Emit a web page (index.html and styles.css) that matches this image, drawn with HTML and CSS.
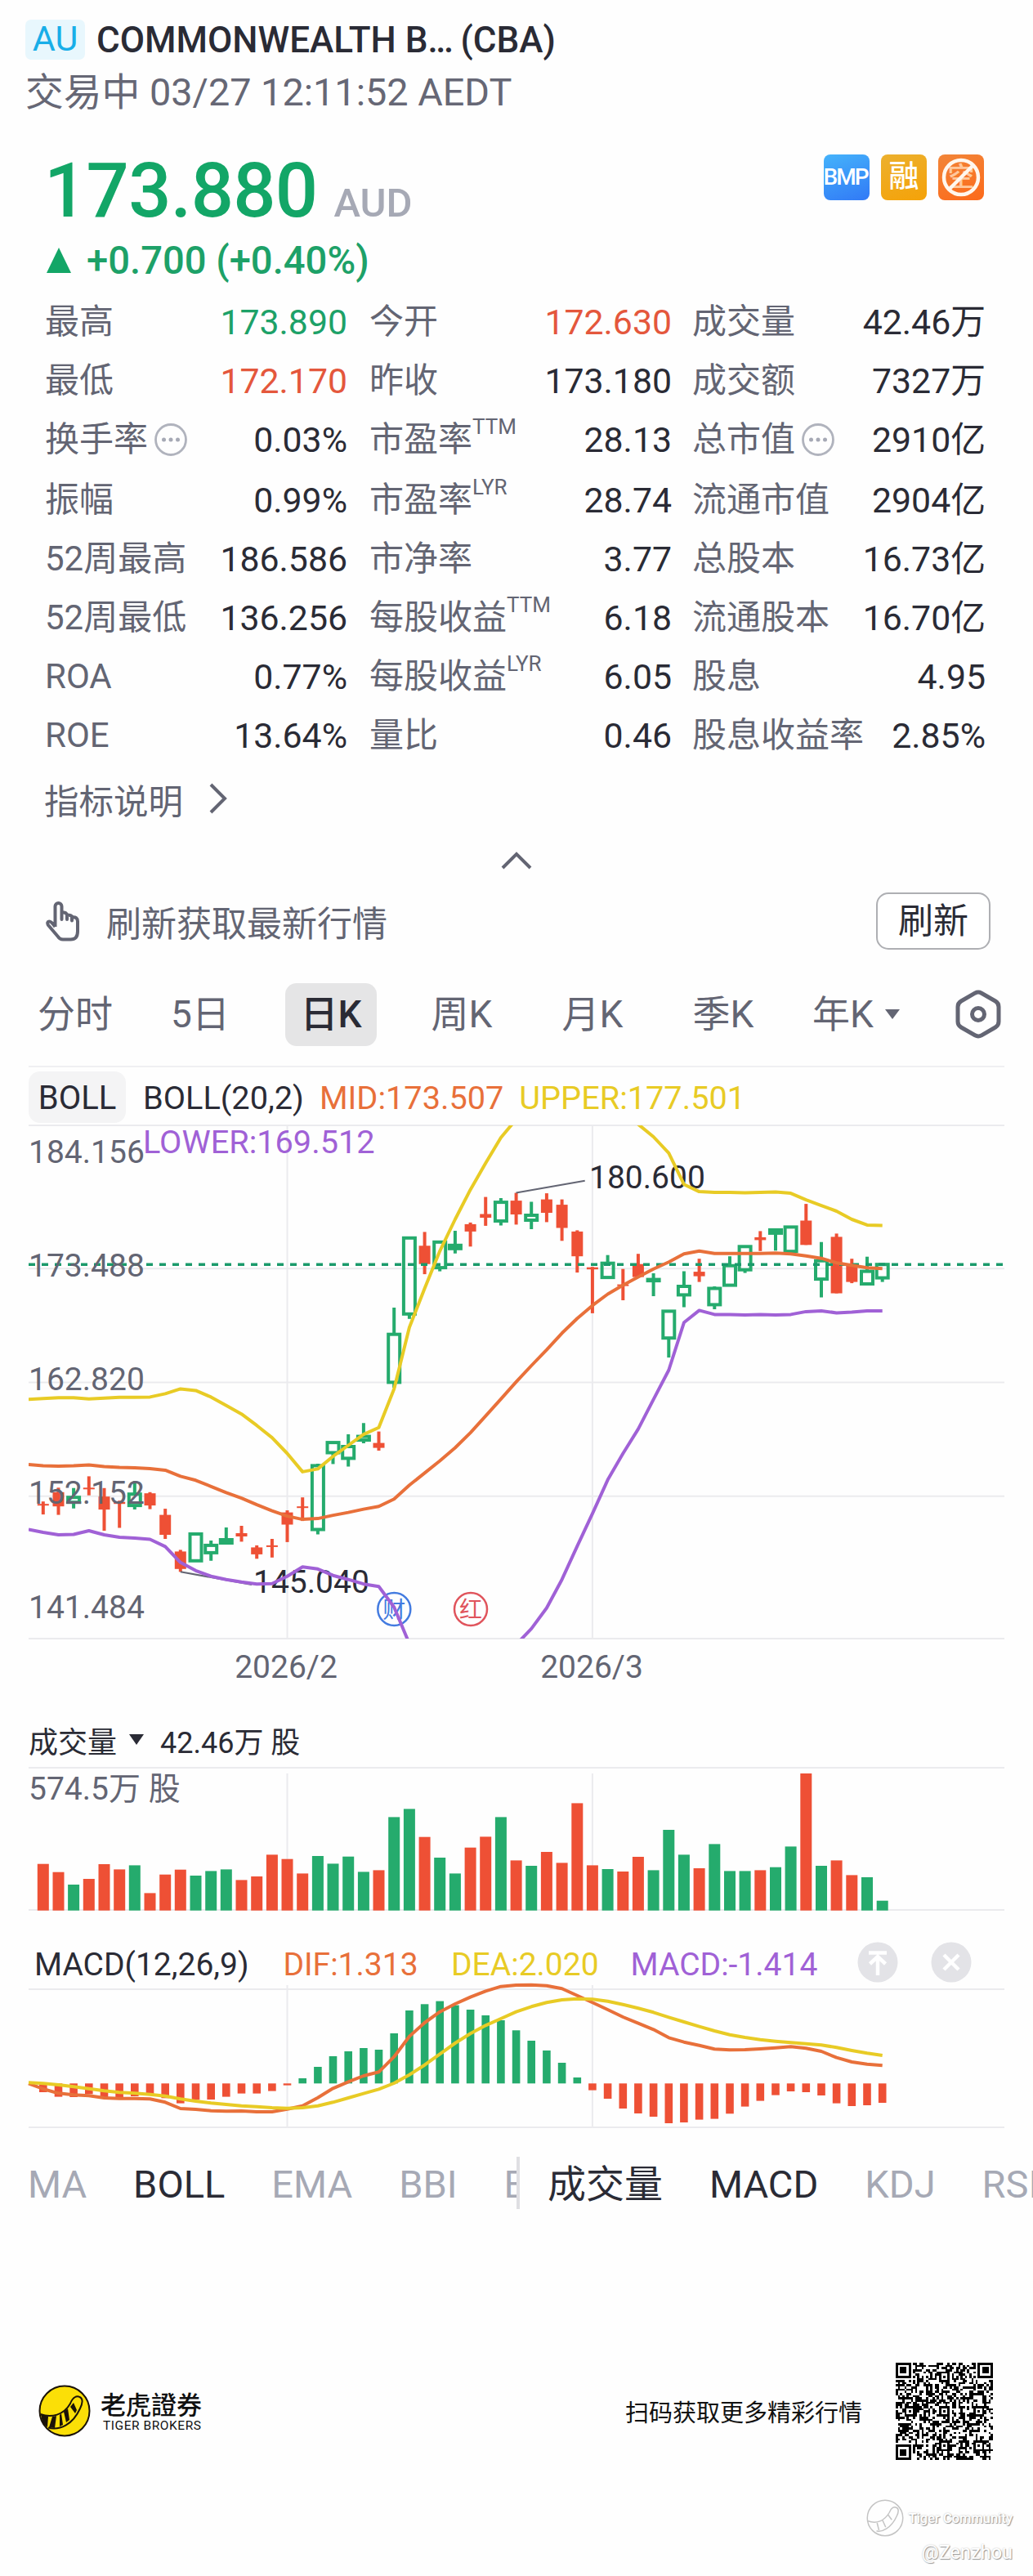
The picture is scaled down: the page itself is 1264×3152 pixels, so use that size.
FILE: index.html
```html
<!DOCTYPE html>
<html lang="zh-CN">
<head>
    <meta charset="UTF-8">
    <meta name="viewport" content="width=device-width, initial-scale=1.0">
    <title>COMMONWEALTH BANK (CBA)</title>
    <link rel="stylesheet" href="styles.css">
</head>
<body>
    <header class="header">
        <div class="header-title">
            <span class="market-tag">AU</span>
            <h1 class="stock-name">COMMONWEALTH B<span class="dots">...</span> (CBA)</h1>
        </div>
        <div class="header-time">交易中 03/27 12:11:52 AEDT</div>
    </header>

    <section class="quote">
        <div class="quote-main">
            <div class="price-row"><span class="price">173.880</span><span class="currency">AUD</span></div>
            <div class="change-row"><span class="arrow-up"></span>+0.700 (+0.40%)</div>
        </div>
        <div class="badges">
            <span class="badge badge-bmp">BMP</span>
            <span class="badge badge-margin">融</span>
            <span class="badge badge-short">空
                <svg class="badge-ban" viewBox="0 0 56 56"><circle cx="28" cy="28" r="21"/><path d="M43 13L13 43"/></svg>
            </span>
        </div>
    </section>

    <section class="stats">
        <div class="stats-col">
            <div class="stat"><span class="label">最高</span><span class="value up">173.890</span></div>
            <div class="stat"><span class="label">最低</span><span class="value down">172.170</span></div>
            <div class="stat tall"><span class="label">换手率<svg class="info" viewBox="0 0 40 40"><circle class="ring" cx="20" cy="20" r="18.5"/><circle cx="11.500" cy="20" r="2.500"/><circle cx="20" cy="20" r="2.500"/><circle cx="28.500" cy="20" r="2.500"/></svg></span><span class="value">0.03%</span></div>
            <div class="stat"><span class="label">振幅</span><span class="value">0.99%</span></div>
            <div class="stat"><span class="label">52周最高</span><span class="value">186.586</span></div>
            <div class="stat"><span class="label">52周最低</span><span class="value">136.256</span></div>
            <div class="stat"><span class="label">ROA</span><span class="value">0.77%</span></div>
            <div class="stat"><span class="label">ROE</span><span class="value">13.64%</span></div>
        </div>
        <div class="stats-col">
            <div class="stat"><span class="label">今开</span><span class="value down">172.630</span></div>
            <div class="stat"><span class="label">昨收</span><span class="value">173.180</span></div>
            <div class="stat tall"><span class="label">市盈率<span class="sup">TTM</span></span><span class="value">28.13</span></div>
            <div class="stat"><span class="label">市盈率<span class="sup">LYR</span></span><span class="value">28.74</span></div>
            <div class="stat"><span class="label">市净率</span><span class="value">3.77</span></div>
            <div class="stat"><span class="label">每股收益<span class="sup">TTM</span></span><span class="value">6.18</span></div>
            <div class="stat"><span class="label">每股收益<span class="sup">LYR</span></span><span class="value">6.05</span></div>
            <div class="stat"><span class="label">量比</span><span class="value">0.46</span></div>
        </div>
        <div class="stats-col">
            <div class="stat"><span class="label">成交量</span><span class="value">42.46万</span></div>
            <div class="stat"><span class="label">成交额</span><span class="value">7327万</span></div>
            <div class="stat tall"><span class="label">总市值<svg class="info" viewBox="0 0 40 40"><circle class="ring" cx="20" cy="20" r="18.5"/><circle cx="11.500" cy="20" r="2.500"/><circle cx="20" cy="20" r="2.500"/><circle cx="28.500" cy="20" r="2.500"/></svg></span><span class="value">2910亿</span></div>
            <div class="stat"><span class="label">流通市值</span><span class="value">2904亿</span></div>
            <div class="stat"><span class="label">总股本</span><span class="value">16.73亿</span></div>
            <div class="stat"><span class="label">流通股本</span><span class="value">16.70亿</span></div>
            <div class="stat"><span class="label">股息</span><span class="value">4.95</span></div>
            <div class="stat"><span class="label">股息收益率</span><span class="value">2.85%</span></div>
        </div>
    </section>

    <div class="explain">指标说明
        <svg class="chevron-right" viewBox="0 0 22 38"><path d="M2 2l17 17L2 36"/></svg>
    </div>
    <div class="collapse">
        <svg class="chevron-up" viewBox="0 0 38 22"><path d="M2 20L19 3l17 17"/></svg>
    </div>

    <div class="refresh">
        <svg class="hand" viewBox="0 0 42 50"><path d="M11.500 32V7a4 4 0 0 1 8 0v16V16.500q0-2 2.500-2t4 2.500v6V18q4.500-1 6 1.500v5V20.500q7-1 7 5v12q0 10-8.500 10H21q-4 0-6.500-4L3 30q-2-4 1-4.500q2.500-.5 7.500 6.500"/></svg>
        <span class="refresh-text">刷新获取最新行情</span>
        <button class="refresh-button">刷新</button>
    </div>

    <nav class="periods">
        <span class="period first">分时</span>
        <span class="period">5日</span>
        <span class="period"><span class="period-active">日K</span></span>
        <span class="period">周K</span>
        <span class="period">月K</span>
        <span class="period">季K</span>
        <span class="period last">年K<span class="caret"></span></span>
        <svg class="settings" viewBox="0 0 56 60"><path d="M24 4.200q4-2.200 8 0l17 9.800q4 2.300 4 7v18q0 4.700-4 7l-17 9.800q-4 2.200-8 0L7 46q-4-2.300-4-7V21q0-4.700 4-7z"/><circle cx="28" cy="30" r="7.500"/></svg>
    </nav>

    <section class="panel">
        <div class="boll-head">
            <span class="boll-button">BOLL</span>
            <div class="boll-legend">
                <span>BOLL(20,2)</span>
                <span class="orange">MID:173.507</span>
                <span class="yellow">UPPER:177.501</span>
                <span class="purple">LOWER:169.512</span>
            </div>
        </div>
        <svg class="kline" id="kline" viewBox="35 1376 1194 690"></svg>
    </section>

    <section class="panel">
        <div class="volume-head">成交量<span class="caret dark"></span>42.46万 股</div>
        <svg class="volume" id="volume" viewBox="35 2162 1194 178"></svg>
    </section>

    <section class="panel">
        <div class="macd-head">
            <span class="macd-name">MACD(12,26,9)</span>
            <span class="macd-dif orange">DIF:1.313</span>
            <span class="macd-dea yellow">DEA:2.020</span>
            <span class="macd-val purple">MACD:-1.414</span>
            <svg class="round-icon" viewBox="0 0 50 50"><circle cx="25" cy="25" r="24.500"/><path d="M14 13.500h22M25 41V19M15.500 27l9.500-9 9.500 9"/></svg>
            <svg class="round-icon" viewBox="0 0 50 50"><circle cx="25" cy="25" r="24.500"/><path d="M16 16l18 18M34 16L16 34"/></svg>
        </div>
        <svg class="macd" id="macd" viewBox="35 2433 1194 172"></svg>
    </section>

    <nav class="indicators">
        <div class="ind-group ind-main">
            <span>MA</span><span class="on">BOLL</span><span>EMA</span><span>BBI</span><span>ENE</span>
        </div>
        <div class="ind-group ind-sub">
            <span class="on">成交量</span><span class="on">MACD</span><span>KDJ</span><span>RSI</span>
        </div>
    </nav>

    <footer class="footer">
        <svg class="tiger" viewBox="0 0 64 64">
            <circle cx="32" cy="32" r="30.500"/>
            <path class="tail" d="M2.500 36C16 41 31 37 39 23C42 15 47 13 50.500 15C55 17 54 23 51 29C42 49 26 56 12 52.500"/>
            <path class="stripe" d="M3 36l9 3-1 13-6-5zM17 39l5-1-2 15-7-1zM26 37l2-2 2 14-4 2zM31 33l5-4 2 14-4 3zM39 27l4-5 4 9-2 4z"/>
        </svg>
        <div class="brand">
            <div class="brand-cn" lang="zh-TW">老虎證券</div>
            <div class="brand-en">TIGER BROKERS</div>
        </div>
        <div class="slogan">扫码获取更多精彩行情</div>
        <svg class="qr" id="qr" viewBox="0 0 45 45" shape-rendering="crispEdges"></svg>
    </footer>

    <div class="watermark">
        <div class="watermark-row">
            <svg class="watermark-logo" viewBox="0 0 64 64"><circle cx="32" cy="32" r="29"/><path d="M4 37C18 42 31 37 39 23C42 15 47 13 50.500 15C55 17 54 23 51 29C42 49 26 56 18 53M19 40l3 12M28 36l5 11M37 27l6 8"/></svg>
            <span>Tiger Community</span>
        </div>
        <div class="watermark-user">@Zenzhou</div>
    </div>

    <script src="script.js"></script>
</body>
</html>
```
FILE: styles.css
```css
* {
    box-sizing: border-box;
}
body {
    margin: 0;
    width: 1264px;
    height: 3152px;
    overflow: hidden;
    background: #fefefe;
    color: #2a2b35;
    font-family: Roboto, 'Noto Sans CJK SC', sans-serif;
}
svg {
    display: block;
    flex: none;
}
.orange {
    color: #e8703a;
}
.yellow {
    color: #e8cb25;
}
.purple {
    color: #a061d6;
}

/* header */
.header {
    height: 173px;
    padding: 24px 31px 0;
}
.header-title {
    display: flex;
    align-items: center;
    height: 49px;
}
.market-tag {
    width: 73px;
    height: 49px;
    line-height: 46px;
    margin-right: 14px;
    border-radius: 7px;
    background: #e8f7fd;
    color: #18aee8;
    font-size: 43px;
    text-align: center;
}
.stock-name {
    margin: 0;
    font-size: 44px;
    font-weight: 500;
    line-height: 54px;
    white-space: nowrap;
}
.dots {
    letter-spacing: -2.5px;
}
.header-time {
    margin-top: 13px;
    font-size: 46.8px;
    line-height: 54px;
    color: #666775;
}

/* price */
.quote {
    display: flex;
    justify-content: space-between;
    height: 185px;
    padding: 0 60px 0 56px;
}
.price-row {
    display: flex;
    align-items: baseline;
    height: 120px;
    line-height: 122px;
}
.price {
    margin-left: -2px;
    font-size: 92px;
    font-weight: 500;
    letter-spacing: -0.7px;
    color: #13a667;
}
.currency {
    margin-left: 20px;
    font-size: 49px;
    font-weight: 500;
    color: #a6a9b5;
}
.change-row {
    display: flex;
    align-items: center;
    height: 51px;
    font-size: 47.2px;
    font-weight: 500;
    color: #1da168;
}
.arrow-up {
    margin: 0 19px 0 1px;
    border: 15px solid transparent;
    border-top: 0;
    border-bottom: 31px solid #13a667;
}
.badges {
    display: flex;
    gap: 14px;
    padding-top: 16px;
}
.badge {
    position: relative;
    width: 56px;
    height: 56px;
    border-radius: 8px;
    overflow: hidden;
    color: #fff;
    font-size: 37px;
    font-weight: 500;
    line-height: 56px;
    text-align: center;
}
.badge-bmp {
    background: linear-gradient(160deg, #45b3fb, #3179f6);
    font-size: 28px;
    letter-spacing: -2px;
    text-indent: -3px;
}
.badge-margin {
    background: linear-gradient(160deg, #ecb02e, #f5a208);
}
.badge-short {
    background: linear-gradient(160deg, #f28538, #fc6a1b);
    color: #ffc79b;
    font-size: 33px;
}
.badge-ban {
    position: absolute;
    left: 0;
    top: 0;
    width: 56px;
    height: 56px;
    fill: none;
    stroke: #fff7ee;
    stroke-width: 4.5;
}

/* stats */
.stats {
    display: flex;
    height: 585px;
    padding-left: 55px;
}
.stats-col {
    width: 370px;
    margin-right: 27px;
}
.stats-col:last-child {
    width: 359px;
    margin: 0 0 0 -2px;
}
.stat {
    display: flex;
    justify-content: space-between;
    align-items: center;
    height: 72px;
    white-space: nowrap;
}
.tall {
    height: 74px;
    padding-bottom: 2px;
}
.label {
    display: flex;
    align-items: center;
    font-size: 42px;
    line-height: 60px;
    color: #636573;
}
.value {
    font-size: 42.8px;
    line-height: 60px;
}
.up {
    color: #1da168;
}
.down {
    color: #e4573c;
}
.sup {
    align-self: flex-start;
    margin-top: -1px;
    font-size: 26px;
    line-height: 30px;
}
.info {
    width: 40px;
    height: 40px;
    margin-left: 8px;
    fill: #a6a9b5;
}
.info .ring {
    fill: none;
    stroke: #b0b3bd;
    stroke-width: 2.8;
}
.explain {
    display: flex;
    align-items: center;
    height: 68px;
    padding-left: 54px;
    font-size: 42.5px;
    color: #636573;
}
.chevron-right,
.chevron-up {
    fill: none;
    stroke: #636573;
    stroke-width: 4;
}
.chevron-right {
    width: 22px;
    height: 38px;
    margin-left: 32px;
}
.collapse {
    display: flex;
    justify-content: center;
    height: 81px;
    padding-top: 31px;
}
.chevron-up {
    width: 38px;
    height: 22px;
}

/* refresh */
.refresh {
    display: flex;
    align-items: center;
    height: 70px;
    padding: 0 52px 0 56px;
}
.hand {
    width: 42px;
    height: 50px;
    fill: none;
    stroke: #636573;
    stroke-width: 4;
    stroke-linejoin: round;
}
.refresh-text {
    margin-left: 32px;
    font-size: 43px;
    color: #636573;
}
.refresh-button {
    width: 140px;
    height: 70px;
    margin-left: auto;
    padding: 0;
    border: 2px solid #aeafb3;
    border-radius: 15px;
    background: #fff;
    color: #2a2b35;
    font: 43px/62px Roboto, 'Noto Sans CJK SC', sans-serif;
}

/* periods */
.periods {
    display: flex;
    align-items: center;
    height: 142px;
    padding: 16px 0 0 46px;
}
.period {
    width: 160px;
    font-size: 46px;
    line-height: 76px;
    text-align: center;
    color: #636573;
}
.period.first {
    width: 119px;
    text-align: left;
}
.period.last {
    display: flex;
    align-items: center;
    width: 175px;
    padding-left: 29px;
}
.period-active {
    display: block;
    width: 112px;
    height: 77px;
    margin: 0 auto;
    border-radius: 14px;
    background: #e5e5e6;
    color: #2a2b35;
    font-weight: 500;
}
.caret {
    margin-left: 14px;
    border: 9px solid transparent;
    border-bottom: 0;
    border-top: 12px solid #636573;
}
.settings {
    width: 56px;
    height: 60px;
    margin-left: 29px;
    fill: none;
    stroke: #636573;
    stroke-width: 5;
}

/* charts */
.panel {
    margin: 0 35px;
}
.boll-head {
    display: flex;
    height: 72px;
    border-top: 2px solid #f0f0f2;
    padding-top: 5px;
}
.boll-button {
    flex: none;
    width: 119px;
    height: 63px;
    border-radius: 14px;
    background: #f4f4f5;
    font-size: 40px;
    line-height: 65px;
    text-align: center;
}
.boll-legend {
    position: relative;
    z-index: 1;
    display: flex;
    flex-wrap: wrap;
    align-content: flex-start;
    column-gap: 19px;
    width: 800px;
    height: 120px;
    margin-left: 21px;
    padding-top: 6px;
    font-size: 39.7px;
    line-height: 54px;
}
.boll-legend span {
    white-space: nowrap;
}
.kline {
    width: 1194px;
    height: 690px;
}
.volume-head {
    display: flex;
    align-items: center;
    height: 62px;
    margin-top: 34px;
    padding-bottom: 5px;
    font-size: 36px;
    white-space: pre;
}
.caret.dark {
    margin: 0 20px 0 15px;
    border-top-width: 13px;
    border-top-color: #2a2b35;
}
.volume {
    width: 1194px;
    height: 178px;
}
.macd-head {
    display: flex;
    align-items: center;
    height: 64px;
    margin-top: 29px;
    padding-left: 7px;
    font-size: 39px;
    line-height: 46px;
    white-space: nowrap;
}
.macd-head span {
    padding-top: 6px;
}
.macd-name {
    width: 305px;
}
.macd-dif {
    width: 206px;
}
.macd-dea {
    width: 220px;
}
.macd-val {
    width: 278px;
}
.round-icon {
    width: 50px;
    height: 50px;
    margin-right: 40px;
    fill: #e3e3e7;
}
.round-icon path {
    fill: none;
    stroke: #fff;
    stroke-width: 4.5;
}
.macd {
    width: 1194px;
    height: 172px;
    overflow: visible;
}
.grid {
    stroke: #ebebee;
    stroke-width: 2;
}
.axis {
    font-size: 39px;
    fill: #636573;
}
.mark {
    font-size: 39px;
    fill: #2a2b35;
}
.line {
    fill: none;
    stroke-width: 4;
    stroke-linejoin: round;
}

/* indicator tabs */
.indicators {
    display: flex;
    height: 64px;
    margin-top: 34px;
    font-size: 47px;
    line-height: 68px;
    color: #a6a9b5;
}
.ind-group {
    display: flex;
    overflow: hidden;
    white-space: nowrap;
}
.ind-group span {
    flex: none;
    margin-right: 57px;
}
.ind-group .on {
    color: #2a2b35;
}
.ind-main {
    width: 636px;
    padding-left: 34px;
    border-right: 4px solid #dfdfe3;
}
.ind-sub {
    width: 628px;
    padding-left: 34px;
}

/* footer */
.footer {
    display: flex;
    align-items: center;
    height: 120px;
    margin-top: 187px;
    padding: 0 49px 0 47px;
    color: #111;
}
.tiger {
    width: 64px;
    height: 64px;
    fill: #fbdf07;
    stroke: #1a1208;
    stroke-width: 2;
}
.tiger .stripe {
    fill: #1a1208;
    stroke: none;
}
.brand {
    margin-left: 12px;
}
.brand-cn {
    font: 500 31px/34px 'Noto Sans CJK TC', sans-serif;
}
.brand-en {
    margin: 1px 0 0 3px;
    font-size: 15.5px;
    line-height: 18px;
    letter-spacing: 0.55px;
}
.slogan {
    margin-left: auto;
    font-size: 29px;
}
.qr {
    width: 119px;
    height: 119px;
    margin-left: 41px;
    fill: #000;
}
.watermark {
    display: flex;
    flex-direction: column;
    align-items: flex-end;
    margin-top: 48px;
    padding-right: 25px;
    color: #fff;
    text-shadow: 1px 1px 1px #999, 0 0 2px #bbb;
}
.watermark-row {
    display: flex;
    align-items: center;
    height: 46px;
    font-size: 16.5px;
    font-weight: 500;
}
.watermark-logo {
    width: 48px;
    height: 48px;
    margin-right: 5px;
    fill: none;
    stroke: #c4c4c4;
    stroke-width: 2;
}
.watermark-user {
    height: 38px;
    font-size: 23.5px;
    line-height: 38px;
}
```
FILE: script.js
```javascript
const GREEN = '#25ab6d';
const RED = '#ee5035';
const ORANGE = '#e8703a';
const YELLOW = '#e8cb25';
const PURPLE = '#a061d6';
const STEP = 18.67;
const LEFT = 35;
const RIGHT = 1229;

// x of the n-th trading day
const dayX = n => 52.8 + STEP * n;
const f = n => n.toFixed(1);

// direction, high, body top, body bottom, low (in half pixels)
const candles = [
    ['r', 1100, 1106, 1110, 1132], ['r', 1066, 1077, 1112, 1133], ['g', 1067, 1090, 1102, 1117],
    ['r', 1038, 1066, 1070, 1085], ['r', 1067, 1088, 1120, 1172], ['r', 1098, 1101, 1106, 1165],
    ['g', 1050, 1082, 1110, 1120], ['r', 1077, 1080, 1110, 1119], ['r', 1118, 1133, 1182, 1192],
    ['r', 1219, 1223, 1266, 1273], ['g', 1180, 1180, 1246, 1246], ['g', 1196, 1208, 1226, 1246],
    ['g', 1164, 1194, 1202, 1202], ['r', 1160, 1178, 1186, 1199], ['r', 1208, 1213, 1230, 1241],
    ['r', 1192, 1208, 1212, 1238], ['r', 1122, 1127, 1157, 1200], ['r', 1090, 1112, 1116, 1148],
    ['g', 1007, 1012, 1169, 1181], ['g', 955, 955, 980, 1008], ['g', 935, 965, 994, 1014],
    ['g', 907, 940, 949, 957], ['r', 928, 956, 968, 975], ['g', 623, 689, 807, 820],
    ['g', 452, 452, 639, 651], ['r', 437, 471, 516, 541], ['g', 462, 462, 525, 534],
    ['g', 434, 470, 478, 490], ['r', 414, 418, 436, 473], ['r', 351, 393, 402, 422],
    ['g', 354, 364, 410, 421], ['r', 341, 360, 394, 419], ['g', 363, 396, 408, 430],
    ['r', 342, 357, 390, 413], ['r', 357, 370, 427, 459], ['r', 433, 436, 497, 537],
    ['r', 523, 524, 529, 637], ['g', 494, 514, 549, 549], ['r', 528, 566, 570, 605],
    ['r', 491, 516, 548, 548], ['g', 539, 554, 557, 595], ['g', 632, 632, 698, 746],
    ['g', 534, 571, 592, 622], ['r', 503, 535, 546, 560], ['g', 571, 576, 616, 627],
    ['g', 497, 520, 568, 568], ['g', 473, 473, 530, 538], ['r', 435, 450, 457, 484],
    ['g', 432, 432, 440, 483], ['g', 425, 425, 485, 485], ['r', 368, 409, 469, 469],
    ['g', 462, 508, 553, 598], ['r', 441, 449, 588, 588], ['r', 503, 517, 560, 563],
    ['g', 498, 534, 565, 565], ['g', 517, 517, 550, 560]
];

// each band starts one day before the first candle
const upper = [849, 847, 845, 845, 848, 846, 844, 844, 843, 835, 823, 827, 843, 864, 885, 913, 943, 982, 1027, 1020,
    989, 962, 935, 918, 823, 672, 576, 484, 406, 333, 268, 205, 160, 110, 90, 85, 95, 110, 130, 150, 172, 203, 243,
    320, 338, 340, 340, 341, 340, 339, 342, 358, 372, 386, 406, 420, 421];
const mid = [1009, 1012, 1013, 1012, 1010, 1014, 1016, 1017, 1019, 1023, 1038, 1048, 1063, 1078, 1092, 1108, 1123,
    1136, 1144, 1142, 1134, 1127, 1119, 1112, 1094, 1060, 1030, 1000, 968, 931, 890, 848, 806, 766, 727, 686, 650,
    618, 590, 568, 548, 528, 511, 491, 484, 490, 490, 490, 490, 489, 491, 496, 502, 513, 519, 525, 527];
const lower = [1169, 1176, 1182, 1181, 1172, 1182, 1188, 1190, 1193, 1211, 1250, 1270, 1284, 1292, 1298, 1303, 1302,
    1284, 1261, 1266, 1282, 1292, 1303, 1309, 1360, 1450, 1560, 1600, 1600, 1600, 1560, 1500, 1452, 1413, 1362, 1292,
    1210, 1130, 1047, 982, 922, 849, 777, 660, 630, 640, 640, 641, 640, 641, 640, 633, 631, 636, 634, 631, 631];

const volumes = [171, 141, 95, 116, 170, 151, 166, 64, 132, 150, 128, 145, 151, 112, 125, 205, 189, 136, 200, 172,
    198, 142, 148, 343, 373, 270, 194, 136, 231, 271, 343, 184, 164, 215, 175, 394, 166, 152, 143, 197, 148, 296,
    205, 155, 244, 145, 145, 148, 159, 235, 503, 164, 184, 130, 122, 36];

const macdBars = [-32, -49, -50, -39, -52, -53, -47, -42, -54, -73, -60, -59, -49, -37, -37, -28, -7, 19, 61, 100,
    118, 130, 124, 184, 268, 291, 302, 287, 271, 250, 232, 195, 157, 121, 76, 22, -25, -56, -92, -110, -122, -146,
    -143, -133, -130, -111, -85, -64, -43, -29, -32, -44, -73, -83, -80, -71];
const dif = [598, 618, 634, 640, 643, 651, 653, 653, 655, 667, 690, 693, 698, 700, 699, 702, 702, 692, 680, 650, 616,
    592, 570, 556, 500, 425, 375, 335, 306, 281, 259, 242, 237, 236, 239, 250, 275, 301, 327, 354, 377, 400, 430,
    446, 458, 472, 475, 474, 471, 467, 463, 469, 480, 503, 519, 527, 532];
const dea = [595, 598, 603, 610, 617, 625, 631, 634, 638, 644, 655, 663, 670, 675, 680, 683, 687, 689, 687, 680, 667,
    651, 635, 619, 597, 566, 530, 490, 450, 415, 385, 360, 335, 316, 301, 291, 287, 289, 296, 308, 322, 337, 355,
    372, 389, 405, 419, 429, 437, 443, 448, 452, 457, 466, 477, 487, 495];

function hline(y) {
    return `<path class="grid" d="M${LEFT} ${y}H${RIGHT}"/>`;
}

function vlines(top, bottom) {
    return [16, 36].map(n => `<path class="grid" d="M${f(dayX(n))} ${top}V${bottom}"/>`).join('');
}

function curve(values, color, toY) {
    const points = values.map((v, i) => `${f(Math.max(LEFT, dayX(i - 1)))},${f(toY(v))}`).join(' ');
    return `<polyline class="line" stroke="${color}" points="${points}"/>`;
}

function drawKline() {
    const toY = v => 1290 + v * 0.49745;
    let out = hline(1377) + hline(1552.2) + hline(1691.4) + hline(1830.7) + hline(2005) + vlines(1377, 2005);

    candles.forEach(([dir, high, top, bottom, low], i) => {
        const x = dayX(i);
        const [h, t, b, l] = [high, top, bottom, low].map(toY);
        if (dir === 'r') {
            out += `<path stroke="${RED}" stroke-width="4" d="M${f(x)} ${f(h)}V${f(l)}"/>`;
            out += `<rect fill="${RED}" x="${f(x - 7)}" y="${f(t)}" width="14" height="${f(b - t)}"/>`;
        } else {
            out += `<path stroke="${GREEN}" stroke-width="4" d="M${f(x)} ${f(h)}V${f(t)}M${f(x)} ${f(b)}V${f(l)}"/>`;
            out += `<rect fill="none" stroke="${GREEN}" stroke-width="4" x="${f(x - 7)}" y="${f(t)}" width="14" height="${f(b - t)}"/>`;
        }
    });

    out += `<path stroke="#1a9a6b" stroke-width="3.5" stroke-dasharray="8 8" d="M${LEFT} 1547.2H${RIGHT}"/>`;

    [['184.156', 1423], ['173.488', 1562], ['162.820', 1701], ['152.152', 1840], ['141.484', 1980]].forEach(([t, y]) => {
        out += `<text class="axis" x="35" y="${y}">${t}</text>`;
    });
    out += '<text class="axis" x="350" y="2053" text-anchor="middle">2026/2</text>';
    out += '<text class="axis" x="724" y="2053" text-anchor="middle">2026/3</text>';

    // high / low markers
    out += '<path stroke="#636573" stroke-width="2" d="M631.5 1459.600L715.700 1444.700M220.800 1923.300L308 1939"/>';
    out += '<text class="mark" x="721" y="1454">180.600</text><text class="mark" x="310" y="1949">145.040</text>';

    // earnings and dividend events
    [['财', 482.3, '#437be0'], ['红', 576, '#e0545c']].forEach(([t, x, c]) => {
        out += `<circle cx="${x}" cy="1969" r="20" fill="none" stroke="${c}" stroke-width="2.500"/>`;
        out += `<text x="${x}" y="1979.500" font-size="28" fill="${c}" text-anchor="middle">${t}</text>`;
    });

    out += '<clipPath id="plot"><rect x="35" y="1377" width="1194" height="628"/></clipPath><g clip-path="url(#plot)">';
    out += curve(upper, YELLOW, toY) + curve(mid, ORANGE, toY) + curve(lower, PURPLE, toY) + '</g>';
    document.getElementById('kline').innerHTML = out;
}

function drawVolume() {
    let out = hline(2163) + hline(2337) + vlines(2170, 2337);
    volumes.forEach((v, i) => {
        const h = v / 3;
        const color = candles[i][0] === 'g' ? GREEN : RED;
        out += `<rect fill="${color}" x="${f(dayX(i) - 7)}" y="${f(2337.7 - h)}" width="14" height="${f(h)}"/>`;
    });
    out += '<text class="axis" x="35" y="2202">574.5万 股</text>';
    document.getElementById('volume').innerHTML = out;
}

function drawMacd() {
    const toY = v => 2350 + v / 3;
    const zero = 2549.3;
    let out = hline(2434) + hline(2603) + vlines(2429, 2604);
    macdBars.forEach((v, i) => {
        const h = Math.abs(v) / 3;
        out += `<rect fill="${v > 0 ? GREEN : RED}" x="${f(dayX(i) - 4.8)}" y="${f(v > 0 ? zero - h : zero)}" width="9.6" height="${f(h)}"/>`;
    });
    out += curve(dif, ORANGE, toY) + curve(dea, YELLOW, toY);
    document.getElementById('macd').innerHTML = out;
}

function drawQr() {
    const size = 45;
    let seed = 20260327;
    const rand = () => (seed = (seed * 1103515245 + 12345) % 2147483648) / 2147483648;
    const grid = [];
    for (let y = 0; y < size; y++) {
        grid.push([]);
        for (let x = 0; x < size; x++) grid[y].push(rand() < 0.5);
    }
    // square rings: finder (r = 3) and alignment (r = 2) patterns
    const ring = (cx, cy, r) => {
        for (let y = -r - 1; y <= r + 1; y++) {
            for (let x = -r - 1; x <= r + 1; x++) {
                const d = Math.max(Math.abs(x), Math.abs(y));
                if (!grid[cy + y] || grid[cy + y][cx + x] === undefined) continue;
                if (d === r + 1 && r === 2) continue;
                grid[cy + y][cx + x] = d === r || d <= r - 2;
            }
        }
    };
    for (let i = 8; i < size - 8; i++) grid[6][i] = grid[i][6] = i % 2 === 0;
    [[3, 3], [41, 3], [3, 41]].forEach(([x, y]) => ring(x, y, 3));
    [[22, 6], [6, 22], [22, 22], [38, 22], [22, 38], [38, 38]].forEach(([x, y]) => ring(x, y, 2));
    let d = '';
    grid.forEach((row, y) => row.forEach((on, x) => {
        if (on) d += `M${x} ${y}h1v1h-1z`;
    }));
    document.getElementById('qr').innerHTML = `<path d="${d}"/>`;
}

drawKline();
drawVolume();
drawMacd();
drawQr();
```
